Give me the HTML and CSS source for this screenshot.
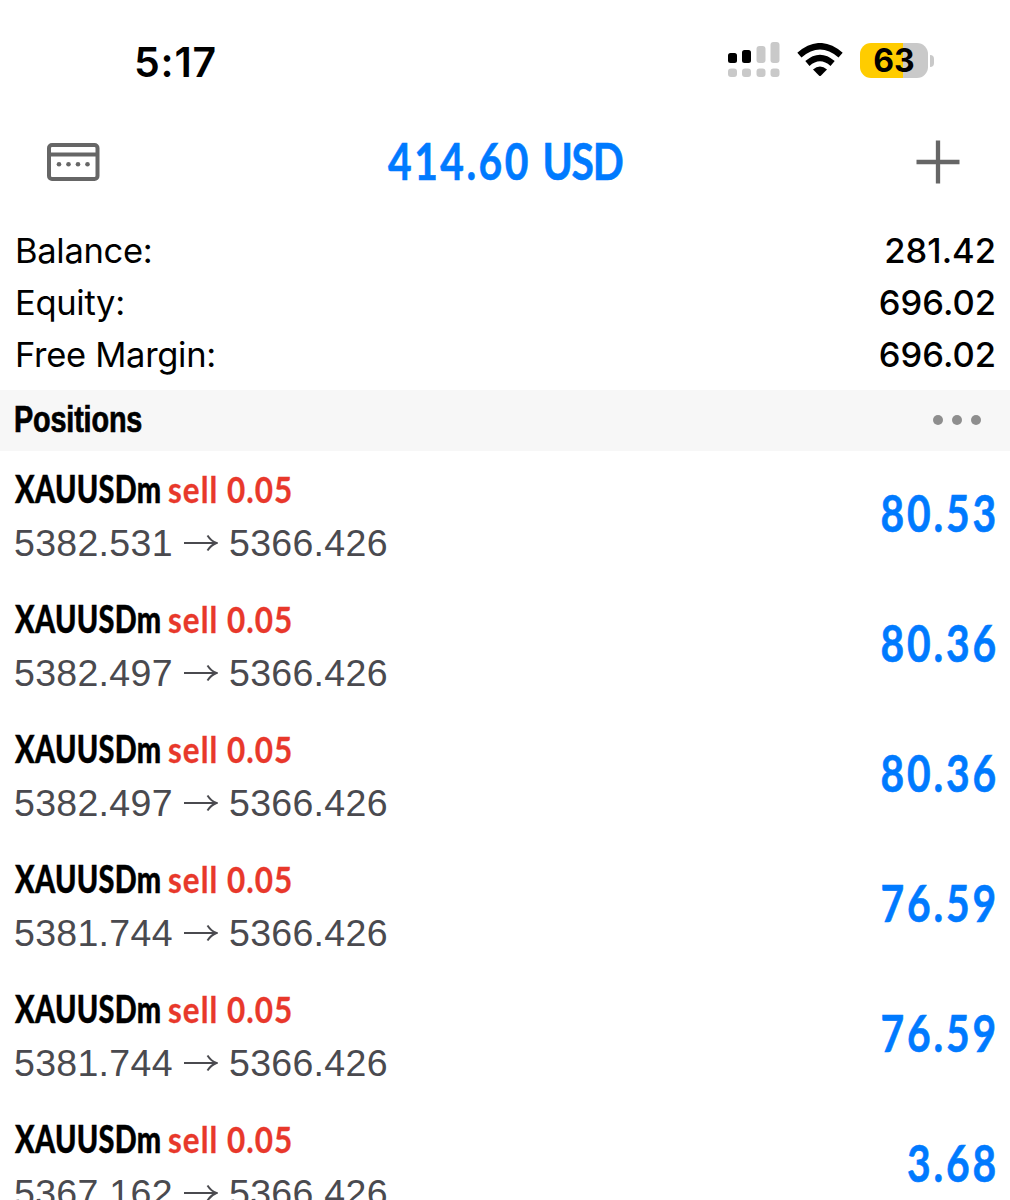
FILE: index.html
```html
<!DOCTYPE html>
<html lang="en">
<head>
<meta charset="utf-8">
<title>Trade</title>
<link rel="stylesheet" href="styles.css">
</head>
<body>
<div class="statusbar">
  <span class="time">5:17</span>
  <div class="indicators">
    <svg class="signal" width="52" height="36" viewBox="0 0 52 36">
      <g fill="#c9c9c9"><rect x="28.500" y="4" width="9" height="17" rx="3"/><rect x="42.500" y="0" width="9" height="21" rx="3"/><rect x="0" y="26.500" width="9" height="8.500" rx="3"/><rect x="14" y="26.500" width="9" height="8.500" rx="3"/><rect x="28.500" y="26.500" width="9" height="8.500" rx="3"/><rect x="42.500" y="26.500" width="9" height="8.500" rx="3"/></g>
      <rect x="0" y="11" width="9" height="10" rx="2.500"/><rect x="14" y="8" width="9" height="13" rx="2.500"/>
    </svg>
    <svg class="wifi" width="46" height="34" viewBox="0 0 46 34">
      <path d="M2.400 12.100Q23 -5.600 43.600 12.100M10.400 20.500Q23 9.500 35.600 20.500" fill="none" stroke="#000" stroke-width="6.400"/>
      <path d="M16 26.400Q23 20.400 30 26.400L23.800 32.700Q23 33.300 22.200 32.700Z"/>
    </svg>
    <div class="battery"><span class="level">63</span><i class="cap"></i></div>
  </div>
</div>
<header class="toolbar">
  <svg width="53" height="38" viewBox="0 0 53 38"><rect x="2" y="2" width="48.500" height="34" rx="3" fill="none" stroke="#666" stroke-width="4"/><path d="M2 11.500H50" stroke="#666" stroke-width="4"/><g fill="#666"><circle cx="12" cy="21.300" r="2.300"/><circle cx="21.500" cy="21.300" r="2.300"/><circle cx="31" cy="21.300" r="2.300"/><circle cx="40.500" cy="21.300" r="2.300"/></g></svg>
  <h1 class="profit"><span>414.60 <em>USD</em></span></h1>
  <svg width="44" height="44" viewBox="0 0 44 44"><path d="M.5 22H43.500M22 .5V43.500" stroke="#666" stroke-width="4.300"/></svg>
</header>
<dl class="summary">
  <div><dt>Balance:</dt><dd>281.42</dd></div>
  <div><dt>Equity:</dt><dd>696.02</dd></div>
  <div><dt>Free Margin:</dt><dd>696.02</dd></div>
</dl>
<div class="section"><h2>Positions</h2><div class="more"><i></i><i></i><i></i></div></div>
<main class="positions">
  <article class="position"><div><p class="order"><b>XAUUSDm</b><span>sell 0.05</span></p><p class="prices"><span>5382.531</span><svg width="34" height="20" viewBox="0 0 34 20"><path d="M0 10H32M23.500 2.500Q27 8 32.500 10Q27 12 23.500 17.500"/></svg><span>5366.426</span></p></div><strong>80.53</strong></article>
  <article class="position"><div><p class="order"><b>XAUUSDm</b><span>sell 0.05</span></p><p class="prices"><span>5382.497</span><svg width="34" height="20" viewBox="0 0 34 20"><path d="M0 10H32M23.500 2.500Q27 8 32.500 10Q27 12 23.500 17.500"/></svg><span>5366.426</span></p></div><strong>80.36</strong></article>
  <article class="position"><div><p class="order"><b>XAUUSDm</b><span>sell 0.05</span></p><p class="prices"><span>5382.497</span><svg width="34" height="20" viewBox="0 0 34 20"><path d="M0 10H32M23.500 2.500Q27 8 32.500 10Q27 12 23.500 17.500"/></svg><span>5366.426</span></p></div><strong>80.36</strong></article>
  <article class="position"><div><p class="order"><b>XAUUSDm</b><span>sell 0.05</span></p><p class="prices"><span>5381.744</span><svg width="34" height="20" viewBox="0 0 34 20"><path d="M0 10H32M23.500 2.500Q27 8 32.500 10Q27 12 23.500 17.500"/></svg><span>5366.426</span></p></div><strong>76.59</strong></article>
  <article class="position"><div><p class="order"><b>XAUUSDm</b><span>sell 0.05</span></p><p class="prices"><span>5381.744</span><svg width="34" height="20" viewBox="0 0 34 20"><path d="M0 10H32M23.500 2.500Q27 8 32.500 10Q27 12 23.500 17.500"/></svg><span>5366.426</span></p></div><strong>76.59</strong></article>
  <article class="position"><div><p class="order"><b>XAUUSDm</b><span>sell 0.05</span></p><p class="prices"><span>5367.162</span><svg width="34" height="20" viewBox="0 0 34 20"><path d="M0 10H32M23.500 2.500Q27 8 32.500 10Q27 12 23.500 17.500"/></svg><span>5366.426</span></p></div><strong>3.68</strong></article>
</main>
</body>
</html>
```
FILE: styles.css
```css
* { box-sizing: border-box; margin: 0; padding: 0; }
body { width: 1010px; height: 1200px; overflow: hidden; background: #fff; color: #000; font-family: Inter, sans-serif; }
svg { display: block; flex: none; }

.statusbar { height: 120px; padding: 0 82px 0 134px; display: flex; align-items: center; justify-content: space-between; }
.time { padding-top: 3px; font-size: 41px; font-weight: 600; line-height: 48px; letter-spacing: 0.8px; }
.indicators { display: flex; align-items: center; }
.signal { margin-right: 17px; }
.wifi { margin-right: 17px; }
.battery { position: relative; width: 68px; height: 35px; border-radius: 11px; background: linear-gradient(90deg, #fc0 42.5px, #c9c9c9 42.5px); text-align: center; }
.level { display: block; font-size: 32px; font-weight: 700; line-height: 35px; }
.cap { position: absolute; left: 70px; top: 12px; width: 4px; height: 12px; border-radius: 0 4px 4px 0; background: #c9c9c9; }

.toolbar { height: 84px; padding: 0 50px 0 47px; display: flex; align-items: center; justify-content: space-between; }
.profit { width: 240px; padding-bottom: 3px; font: 700 51px/60px Lato, sans-serif; color: #007aff; white-space: nowrap; }
.profit span { display: inline-block; transform: scaleX(.8); transform-origin: left; letter-spacing: 3.1px; -webkit-text-stroke: .6px; }
.profit em { font-style: normal; letter-spacing: -1.5px; margin-left: -1px; }

.summary { height: 186px; padding: 21px 14px 0 15px; font-size: 34.5px; line-height: 52px; }
.summary div { display: flex; justify-content: space-between; }
.summary dt { letter-spacing: -.3px; }
.summary dd { font-weight: 500; }

.section { height: 61px; padding: 0 29px 1px 14px; display: flex; align-items: center; justify-content: space-between; background: #f7f7f7; }
.section h2 { font: 700 36px/60px "Liberation Sans", sans-serif; letter-spacing: -.2px; transform: scaleX(.8); transform-origin: left; -webkit-text-stroke: .7px; }
.more { display: flex; gap: 9px; }
.more i { width: 10px; height: 10px; border-radius: 50%; background: #8e8e8e; }

.position { height: 130px; padding: 11px 14px 0 15px; display: flex; justify-content: space-between; }
.order { display: flex; font: 700 37px/54px Lato, sans-serif; }
.order b { width: 153px; transform: scaleX(.78); transform-origin: left; letter-spacing: .4px; white-space: nowrap; -webkit-text-stroke: .4px; }
.order span { transform: scaleX(.85); transform-origin: left; letter-spacing: 1.2px; color: #e8382b; white-space: nowrap; -webkit-text-stroke: .3px; }
.prices { display: flex; align-items: center; margin-left: -1px; font: 37.5px/54px "Liberation Sans", sans-serif; letter-spacing: .3px; color: #4a4a4f; }
.prices span:first-child { width: 170px; }
.prices svg { margin-right: 11px; fill: none; stroke: #4a4a4f; stroke-width: 2; }
.position strong { margin-right: -3px; font: 700 51px/102px Lato, sans-serif; letter-spacing: 3.5px; color: #007aff; transform: scaleX(.8); transform-origin: right; -webkit-text-stroke: .6px; }
```
